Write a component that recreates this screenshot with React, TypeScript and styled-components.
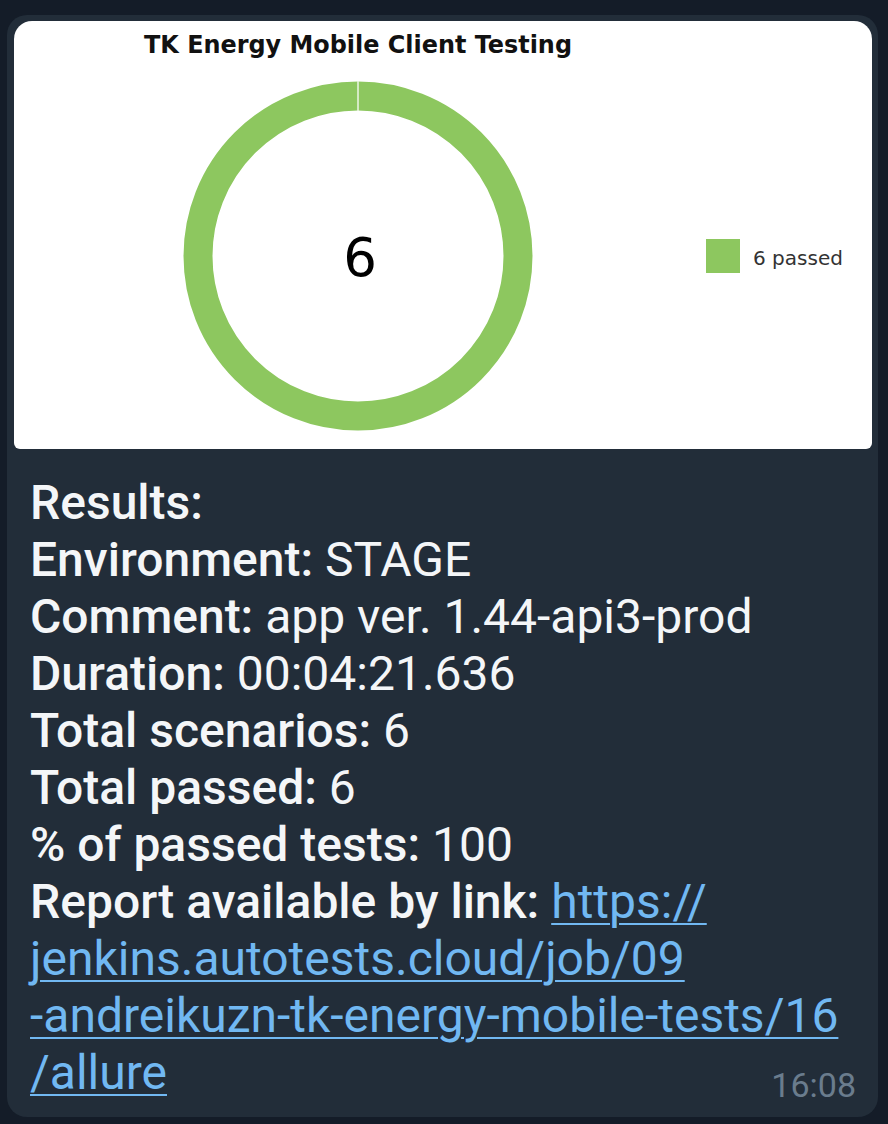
import React from "react";
import styled, { createGlobalStyle } from "styled-components";

const Global = createGlobalStyle`
  html, body { margin: 0; padding: 0; background: #141c28; }
  body { font-family: Roboto, "Liberation Sans", sans-serif; }
`;

const Page = styled.div`
  min-height: 1124px;
  box-sizing: border-box;
  padding: 15px 10px 7px 7px;
  background: #141c28;
`;

const Bubble = styled.div`
  position: relative;
  background: #222d39;
  border-radius: 20px;
  padding: 6px 6px 16px 7px;
`;

const Media = styled.div`
  height: 428px;
  background: #ffffff;
  border-radius: 18px 18px 6px 6px;
  overflow: hidden;
`;

const Body = styled.div`
  padding: 25px 16px 0 16px;
  color: #f4f6f8;
  font-family: Roboto, "Liberation Sans", sans-serif;
  font-size: 48px;
  line-height: 57px;
  white-space: nowrap;
`;

const Line = styled.div``;

const Label = styled.span`
  font-weight: 500;
`;

const Link = styled.a`
  color: #71b8f2;
  text-decoration: underline;
  text-decoration-thickness: 2px;
  text-underline-offset: 5px;
`;

const Time = styled.span`
  position: absolute;
  right: 22px;
  bottom: 15px;
  font-family: Roboto, "Liberation Sans", sans-serif;
  font-size: 34px;
  line-height: 34px;
  color: #6a7c8d;
`;

const Chart: React.FC = () => {
  const cx = 344;
  const cy = 235;
  const r = 160;
  return (
    <svg width="100%" height="428" viewBox="0 0 858 428" xmlns="http://www.w3.org/2000/svg">
      <text
        x={344}
        y={32}
        textAnchor="middle"
        fontFamily="'DejaVu Sans', sans-serif"
        fontWeight="bold"
        fontSize="24"
        textLength="428"
        lengthAdjust="spacingAndGlyphs"
        fill="#111"
      >
        TK Energy Mobile Client Testing
      </text>
      <circle cx={cx} cy={cy} r={r} fill="none" stroke="#8dc75f" strokeWidth={29} />
      <line x1={cx} y1={cy - r - 15} x2={cx} y2={cy - r + 15} stroke="#eef6e6" strokeWidth={1.5} />
      <text
        x={346}
        y={255}
        textAnchor="middle"
        fontFamily="'DejaVu Sans', sans-serif"
        fontSize="53"
        fill="#000"
      >
        6
      </text>
      <rect x={692} y={218} width={34} height={34} fill="#8dc75f" />
      <text
        x={739}
        y={244}
        fontFamily="'DejaVu Sans', sans-serif"
        fontSize="19"
        textLength="90"
        lengthAdjust="spacingAndGlyphs"
        fill="#333"
      >
        6 passed
      </text>
    </svg>
  );
};

export default function App() {
  return (
    <>
      <Global />
      <Page>
        <Bubble>
          <Media>
            <Chart />
          </Media>
          <Body>
            <Line><Label>Results:</Label></Line>
            <Line><Label>Environment:</Label> STAGE</Line>
            <Line><Label>Comment:</Label> app ver. 1.44-api3-prod</Line>
            <Line><Label>Duration:</Label> 00:04:21.636</Line>
            <Line><Label>Total scenarios:</Label> 6</Line>
            <Line><Label>Total passed:</Label> 6</Line>
            <Line><Label>% of passed tests:</Label> 100</Line>
            <Line>
              <Label>Report available by link:</Label>{" "}
              <Link href="#">https://</Link>
            </Line>
            <Line><Link href="#">jenkins.autotests.cloud/job/09</Link></Line>
            <Line><Link href="#">-andreikuzn-tk-energy-mobile-tests/16</Link></Line>
            <Line><Link href="#">/allure</Link></Line>
          </Body>
          <Time>16:08</Time>
        </Bubble>
      </Page>
    </>
  );
}
